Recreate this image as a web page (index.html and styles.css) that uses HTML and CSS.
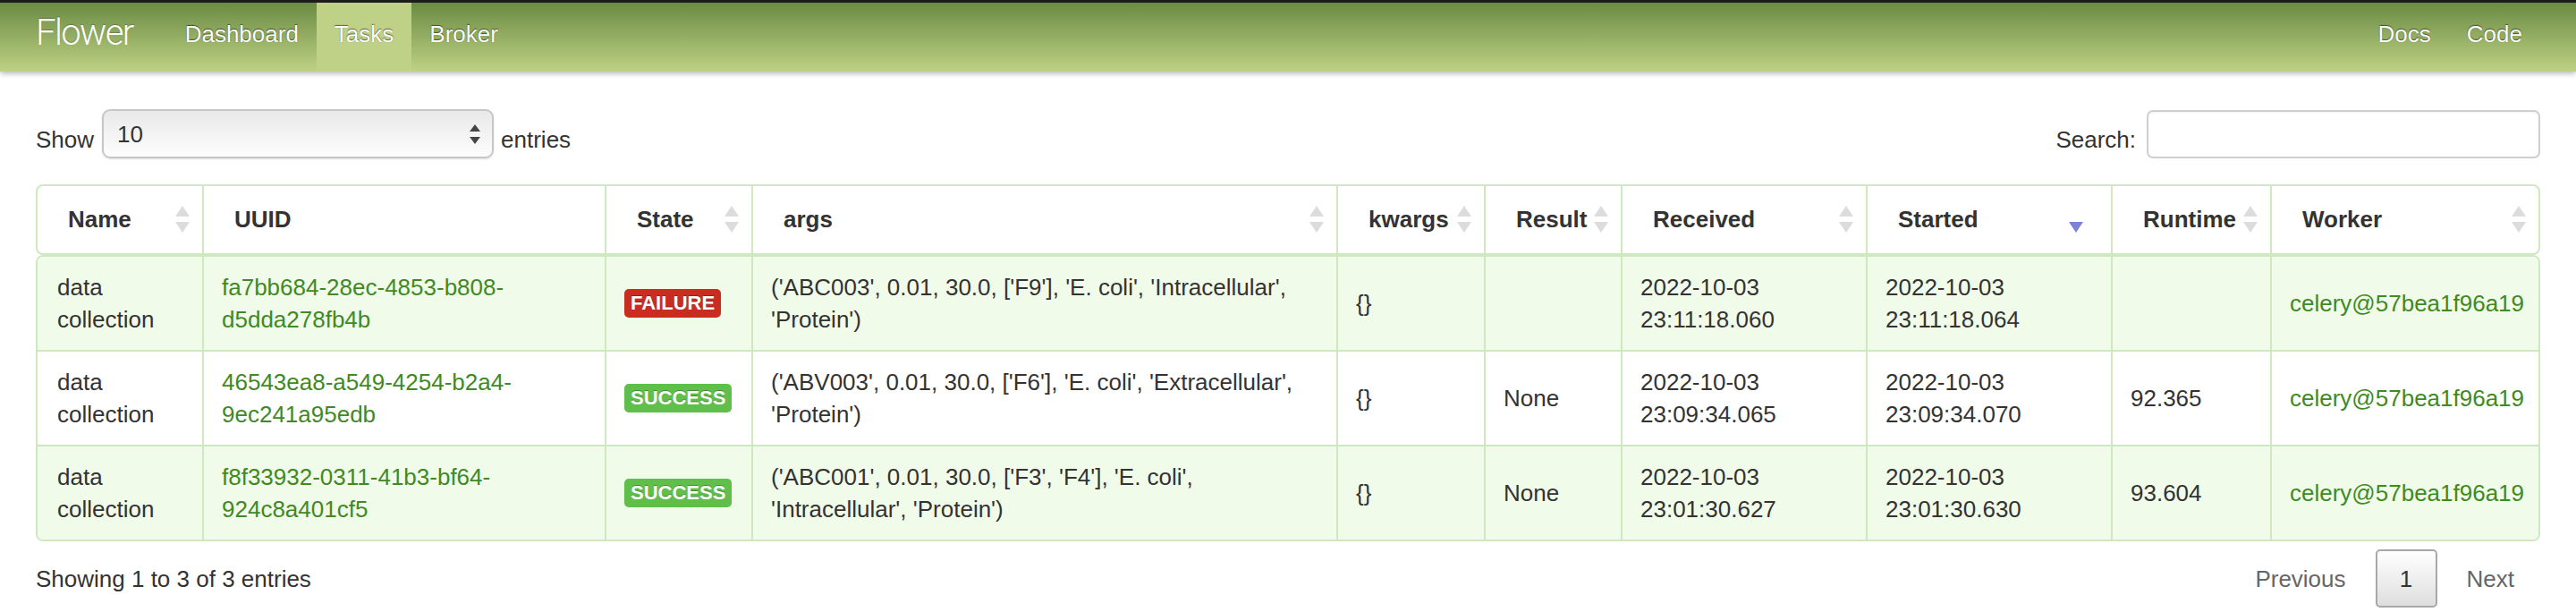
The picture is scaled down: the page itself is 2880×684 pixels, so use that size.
FILE: index.html
```html
<!DOCTYPE html>
<html lang="en">
<head>
<meta charset="utf-8">
<title>Flower</title>
<link rel="stylesheet" href="styles.css">
</head>
<body>
<header class="navbar">
  <nav class="nav-group">
    <a class="brand" href="#">Flower</a>
    <a class="nav-link" href="#">Dashboard</a>
    <a class="nav-link active" href="#">Tasks</a>
    <a class="nav-link" href="#">Broker</a>
  </nav>
  <nav class="nav-group">
    <a class="nav-link" href="#">Docs</a>
    <a class="nav-link" href="#">Code</a>
  </nav>
</header>

<main class="content">
  <div class="controls">
    <div class="length">
      <span class="lbl">Show</span>
      <div class="select">
        <span>10</span>
        <svg class="select-arrows" width="14" height="24" viewBox="0 0 14 24"><path d="M7 1 L13 9 L1 9 Z" fill="#444"/><path d="M7 23 L13 15 L1 15 Z" fill="#444"/></svg>
      </div>
      <span class="lbl">entries</span>
    </div>
    <div class="filter">
      <span class="lbl">Search:</span>
      <div class="search-input"></div>
    </div>
  </div>

  <div class="dt-head">
    <div class="tr">
      <div class="th">Name<span class="sort"></span></div>
      <div class="th">UUID</div>
      <div class="th">State<span class="sort"></span></div>
      <div class="th">args<span class="sort"></span></div>
      <div class="th">kwargs<span class="sort"></span></div>
      <div class="th">Result<span class="sort"></span></div>
      <div class="th">Received<span class="sort"></span></div>
      <div class="th">Started<span class="sort desc"></span></div>
      <div class="th">Runtime<span class="sort"></span></div>
      <div class="th">Worker<span class="sort"></span></div>
    </div>
  </div>

  <div class="dt-body">
    <div class="tr odd">
      <div class="td first">data<br>collection</div>
      <div class="td"><a class="link" href="#">fa7bb684-28ec-4853-b808-<br>d5dda278fb4b</a></div>
      <div class="td"><span class="label label-fail">FAILURE</span></div>
      <div class="td">('ABC003', 0.01, 30.0, ['F9'], 'E. coli', 'Intracellular',<br>'Protein')</div>
      <div class="td">{}</div>
      <div class="td"></div>
      <div class="td">2022-10-03<br>23:11:18.060</div>
      <div class="td">2022-10-03<br>23:11:18.064</div>
      <div class="td"></div>
      <div class="td"><a class="link" href="#">celery@57bea1f96a19</a></div>
    </div>
    <div class="tr">
      <div class="td first">data<br>collection</div>
      <div class="td"><a class="link" href="#">46543ea8-a549-4254-b2a4-<br>9ec241a95edb</a></div>
      <div class="td"><span class="label label-ok">SUCCESS</span></div>
      <div class="td">('ABV003', 0.01, 30.0, ['F6'], 'E. coli', 'Extracellular',<br>'Protein')</div>
      <div class="td">{}</div>
      <div class="td">None</div>
      <div class="td">2022-10-03<br>23:09:34.065</div>
      <div class="td">2022-10-03<br>23:09:34.070</div>
      <div class="td">92.365</div>
      <div class="td"><a class="link" href="#">celery@57bea1f96a19</a></div>
    </div>
    <div class="tr odd">
      <div class="td first">data<br>collection</div>
      <div class="td"><a class="link" href="#">f8f33932-0311-41b3-bf64-<br>924c8a401cf5</a></div>
      <div class="td"><span class="label label-ok">SUCCESS</span></div>
      <div class="td">('ABC001', 0.01, 30.0, ['F3', 'F4'], 'E. coli',<br>'Intracellular', 'Protein')</div>
      <div class="td">{}</div>
      <div class="td">None</div>
      <div class="td">2022-10-03<br>23:01:30.627</div>
      <div class="td">2022-10-03<br>23:01:30.630</div>
      <div class="td">93.604</div>
      <div class="td"><a class="link" href="#">celery@57bea1f96a19</a></div>
    </div>
  </div>

  <div class="footer">
    <div class="info">Showing 1 to 3 of 3 entries</div>
    <div class="pager">
      <span class="pg">Previous</span>
      <span class="pg current">1</span>
      <span class="pg">Next</span>
    </div>
  </div>
</main>
</body>
</html>
```

FILE: styles.css
```css
* {
  box-sizing: border-box;
}

body {
  margin: 0;
  background: #fff;
  color: #333;
  font-family: "Liberation Sans", Arial, sans-serif;
  font-size: 26px;
  line-height: 36px;
}

/* ---------- navbar ---------- */
.navbar {
  display: flex;
  justify-content: space-between;
  height: 80px;
  padding: 0 40px;
  border-top: 3px solid #1c1c1c;
  background: linear-gradient(#6a8b43, #bed284);
  box-shadow: 0 2px 6px rgba(0, 0, 0, 0.3);
}

.nav-group {
  display: flex;
}

.brand {
  padding: 16px 38px 25px 0;
  color: #fff;
  font-family: Roboto, "Liberation Sans", sans-serif;
  font-weight: 300;
  font-size: 40px;
  line-height: 36px;
  letter-spacing: -1.6px;
  text-decoration: none;
  text-shadow: 0 -1px 1px rgba(0, 0, 0, 0.25);
}

.nav-link {
  padding: 17px 20px 24px;
  color: #fff;
  text-decoration: none;
  text-shadow: 0 -1px 1px rgba(0, 0, 0, 0.5), 0 0 1px rgba(0, 0, 0, 0.3);
}

.nav-link.active {
  background: #bfd186;
}

/* ---------- controls ---------- */
.content {
  padding: 0 40px;
}

.controls {
  display: flex;
  justify-content: space-between;
  align-items: center;
  margin-top: 42px;
}

.length,
.filter {
  display: flex;
  align-items: center;
}

.lbl {
  padding-top: 12px;
}

.select {
  display: flex;
  align-items: center;
  justify-content: space-between;
  width: 438px;
  height: 55px;
  margin: 0 8px 0 9px;
  padding: 0 12px 0 15px;
  border: 2px solid #c7c7c7;
  border-radius: 9px;
  background: linear-gradient(#e9e9e9, #fdfdfd);
  box-shadow: 0 1px 2px rgba(0, 0, 0, 0.12);
}

.select-arrows {
  display: block;
}

.search-input {
  width: 440px;
  height: 54px;
  margin-left: 12px;
  border: 2px solid #cfcfcf;
  border-radius: 7px;
  background: #fff;
  box-shadow: inset 0 1px 2px rgba(0, 0, 0, 0.06);
}

/* ---------- table ---------- */
.dt-head,
.dt-body {
  border: 2px solid #cfe8c0;
  border-radius: 8px;
  overflow: hidden;
}

.dt-head {
  margin-top: 29px;
}

.tr {
  display: grid;
  grid-template-columns: 184px 450px 164px 654px 165px 153px 274px 274px 178px 1fr;
}

.tr + .tr {
  border-top: 2px solid #cfe8c0;
}

.tr.odd {
  background: #f1fbea;
}

.th {
  display: flex;
  align-items: center;
  padding: 19px 12px 20px 34px;
  font-weight: bold;
}

.th + .th,
.td + .td {
  border-left: 2px solid #cfe8c0;
}

.td {
  display: flex;
  align-items: center;
  padding: 16px 20px;
  white-space: nowrap;
}

.td.first {
  padding-left: 22px;
}

.sort {
  display: flex;
  flex-direction: column;
  gap: 6px;
  margin-left: auto;
  margin-right: 2px;
}

.sort::before {
  content: "";
  border-left: 8px solid transparent;
  border-right: 8px solid transparent;
  border-bottom: 12px solid #dcdcdc;
}

.sort::after {
  content: "";
  border-left: 8px solid transparent;
  border-right: 8px solid transparent;
  border-top: 12px solid #dcdcdc;
}

.sort.desc {
  margin-right: 19px;
}

.sort.desc::before {
  border-bottom-color: transparent;
}

.sort.desc::after {
  border-top-color: #7b82d8;
}

.link {
  color: #3f8a22;
  text-decoration: none;
}

.label {
  display: inline-block;
  height: 32px;
  padding: 0 7px;
  border-radius: 5px;
  color: #fff;
  font-size: 22px;
  font-weight: bold;
  line-height: 32px;
  text-shadow: 0 -1px 0 rgba(0, 0, 0, 0.3);
}

.label-fail {
  background: #c92d22;
}

.label-ok {
  background: #5fbf4a;
}

/* ---------- footer ---------- */
.footer {
  display: flex;
  justify-content: space-between;
  align-items: center;
  margin-top: 9px;
}

.pager {
  display: flex;
  align-items: center;
}

.pg {
  padding: 0 33px;
  color: #666;
}

.pg:last-child {
  padding-right: 29px;
}

.pg.current {
  display: flex;
  align-items: center;
  justify-content: center;
  width: 69px;
  height: 65px;
  padding: 0;
  border: 2px solid #a8a8a8;
  border-radius: 5px;
  background: linear-gradient(#fff, #dedede);
  color: #333;
}
```
